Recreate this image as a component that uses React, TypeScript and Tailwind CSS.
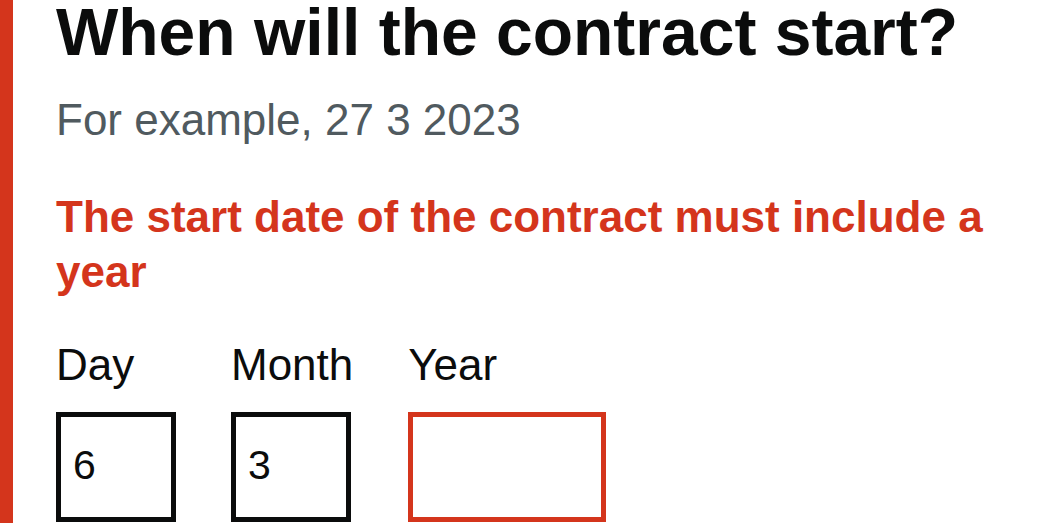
import React from "react";

const fields = [
  { id: "day", label: "Day", value: "6", width: "w-[120px]", error: false },
  { id: "month", label: "Month", value: "3", width: "w-[120px]", error: false },
  { id: "year", label: "Year", value: "", width: "w-[198px]", error: true },
];

export default function App() {
  return (
    <div className="h-[523px] overflow-hidden bg-white font-['Liberation_Sans',Arial,sans-serif] text-[#0b0c0c]">
      <div className="h-full border-l-[13px] border-[#d4351c] pl-[43px] pr-[30px]">
        {/* Question */}
        <h1 className="text-[66px] font-bold leading-[65px] whitespace-nowrap">
          When will the contract start?
        </h1>

        {/* Hint */}
        <p className="mt-[27px] text-[44px] leading-[55px] text-[#505a5f]">
          For example, 27 3 2023
        </p>

        {/* Error message */}
        <p className="mt-[42px] text-[44px] font-bold leading-[55px] text-[#d4351c]">
          The start date of the contract must include a year
        </p>

        {/* Date inputs */}
        <div className="mt-[38px] flex gap-[55px]">
          {fields.map((f) => (
            <div key={f.id} className="flex flex-col">
              <label htmlFor={f.id} className="text-[44px] leading-[55px]">
                {f.label}
              </label>
              <input
                id={f.id}
                defaultValue={f.value}
                className={`mt-[20px] h-[110px] ${f.width} border-[5.5px] pl-[12px] pr-[12px] pb-[4px] text-[41px] outline-none ${
                  f.error ? "border-[#d4351c]" : "border-[#0b0c0c]"
                }`}
              />
            </div>
          ))}
        </div>
      </div>
    </div>
  );
}
